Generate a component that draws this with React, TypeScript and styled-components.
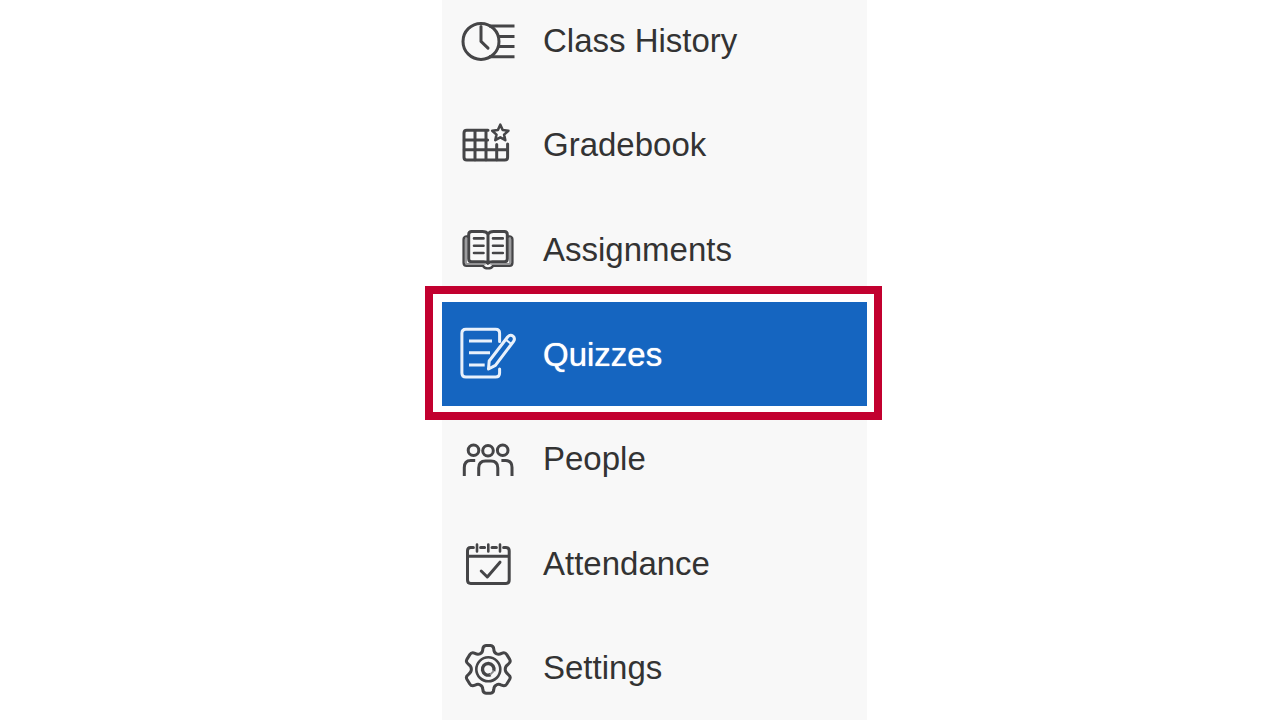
import React from "react";
import styled, { createGlobalStyle } from "styled-components";

const GlobalStyle = createGlobalStyle`
  * { box-sizing: border-box; }
  body {
    margin: 0;
    background: #ffffff;
    font-family: "Liberation Sans", Arial, sans-serif;
  }
`;

const Page = styled.div`
  display: grid;
  grid-template-columns: 442fr 425fr 413fr;
  height: 100vh;
  min-height: 560px;
  overflow: hidden;
`;

const Sidebar = styled.nav`
  grid-column: 2;
  display: flex;
  flex-direction: column;
  background: #f8f8f8;
`;

const Menu = styled.ul`
  flex: 1;
  display: flex;
  flex-direction: column;
  margin: -12px 0 0;
  padding: 0;
  list-style: none;
`;

const MenuItem = styled.li<{ $highlighted: boolean }>`
  flex: 1;
  display: flex;
  position: relative;
  z-index: ${(p) => (p.$highlighted ? 1 : 0)};

  ${(p) =>
    p.$highlighted &&
    `
    &::before {
      content: "";
      position: absolute;
      z-index: -1;
      inset: -16px -15px -14px -17px;
      background: #ffffff;
      border: 8px solid #c2002f;
    }
  `}
`;

const MenuLink = styled.a<{ $active: boolean }>`
  flex: 1;
  display: flex;
  align-items: center;
  gap: 27px;
  padding: 0 18px;
  font-size: 33px;
  line-height: 40px;
  white-space: nowrap;
  text-decoration: none;
  color: ${(p) => (p.$active ? "#ffffff" : "#333333")};
  background: ${(p) => (p.$active ? "#1565c0" : "transparent")};
  text-shadow: ${(p) => (p.$active ? "0 0 1px #ffffff" : "none")};
`;

const Label = styled.span`
  padding-top: 1px;
`;

const Icon = styled.svg<{ $active: boolean }>`
  flex: none;
  width: 56px;
  height: 56px;
  fill: none;
  stroke: ${(p) => (p.$active ? "#e9f1fb" : "#454547")};
  stroke-width: 3;
  stroke-linecap: round;
  stroke-linejoin: round;
`;

const HistoryIcon = (
  <>
    <circle cx="21" cy="29.4" r="18" />
    <path d="M21 14.5V29.4L28 36.2" />
    <path strokeLinecap="butt" d="M29 13.9H54.5M37 24.4H54.5M38 34.6H54.5M29 44.8H54.5" />
  </>
);

const GradebookIcon = (
  <>
    <path d="M28 13.2H6.8Q4 13.2 4 16V40.2Q4 43 6.8 43H44.8Q47.6 43 47.6 40.2V27" />
    <path d="M15 13.4V42.8M26 13.4V42.8M36.7 27.5V42.8M4.3 23H27.6M4.3 32.8H47.3" />
    <path
      strokeWidth="2.6"
      d="M40.3 7.7L42.7 13L48.4 13.7L44.1 17.6L45.3 23.2L40.3 20.4L35.3 23.2L36.5 17.6L32.2 13.7L37.9 13Z"
    />
  </>
);

const AssignmentsIcon = (
  <>
    <path d="M28 13.2Q26.5 10.6 22.5 10.6H11.7Q8.7 10.6 8.7 13.6V37.8Q8.7 40.8 11.7 40.8H23.5Q27 40.8 28 42.3Q29 40.8 32.5 40.8H44.3Q47.3 40.8 47.3 37.8V13.6Q47.3 10.6 44.3 10.6H33.5Q29.5 10.6 28 13.2V42" />
    <path
      strokeWidth="2.4"
      d="M8.7 15.5H6.3Q3.6 16 3.6 18.5V41.8Q3.6 44.8 6.6 44.8H23Q24.5 47.4 28 47.4Q31.5 47.4 33 44.8H49.4Q52.4 44.8 52.4 41.8V18.5Q52.4 16 49.7 15.5H47.3"
    />
    <path d="M6 17V42.8H25M50 17V42.8H31" stroke="#929294" strokeWidth="1.8" />
    <path strokeWidth="2.6" d="M14 17.4H23.5M14 24.7H23.5M14 32H23.5M33 17.4H42.8M33 24.7H42.8M33 32H42.8" />
  </>
);

const QuizzesIcon = (
  <>
    <path d="M39.6 15.5V7.3Q39.6 3.3 35.6 3.3H5.9Q1.9 3.3 1.9 7.3V47Q1.9 51 5.9 51H35.6Q39.6 51 39.6 47V43" />
    <path strokeLinecap="butt" d="M9 15H32M9 26.8H30M9 39H24.7" />
    <path d="M28.5 43L29.2 35L47.6 11Q50.4 8 53 10.2Q55.6 12.6 53.4 15.6L35.4 39.4Z" />
    <path strokeWidth="2" d="M45.8 13.6L51.2 18" />
  </>
);

const PeopleIcon = (
  <>
    <circle cx="13.5" cy="19.2" r="5.3" />
    <circle cx="28" cy="19.8" r="5.3" />
    <circle cx="42.7" cy="19.2" r="5.3" />
    <path
      strokeLinecap="butt"
      d="M4.3 45V36.5Q4.3 29.4 10.8 29.4H15.2M18.7 45V37Q18.7 30 25.5 30H31Q37.8 30 37.8 37V45M52 45V36.5Q52 29.4 45.5 29.4H41.4"
    />
  </>
);

const AttendanceIcon = (
  <>
    <path d="M13.4 12.6H10.7Q7.5 12.6 7.5 15.8V45Q7.5 48.4 10.7 48.4H46Q49.2 48.4 49.2 45V15.8Q49.2 12.6 46 12.6H43.6M20.6 12.6H24.6M32 12.6H36.4M7.5 21.3H49.2" />
    <path strokeWidth="2.6" d="M17 9.5V16.5M28.3 9.5V16.5M40 9.5V16.5" />
    <path d="M21.2 36L27.3 42L40 27.2" />
  </>
);

const SettingsIcon = (
  <>
    <path d="M22.8 9.2Q23 5.6 26 5.4H30.6Q33.6 5.6 33.8 9.2Q33.8 12.6 36.6 13.8Q38.8 15 41.6 13.4Q45 11.8 46.8 14.6L49.7 19.4Q51.2 22.2 48.2 24.2Q45.2 26.2 45.2 29.3Q45.2 32.4 48.2 34.4Q51.2 36.4 49.7 39.2L46.8 44Q45 46.8 41.6 45.2Q38.8 43.6 36.6 44.8Q33.8 46 33.8 49.4Q33.6 53 30.6 53.2H26Q23 53 22.8 49.4Q22.8 46 20 44.8Q17.8 43.6 15 45.2Q11.6 46.8 9.8 44L6.9 39.2Q5.4 36.4 8.4 34.4Q11.4 32.4 11.4 29.3Q11.4 26.2 8.4 24.2Q5.4 22.2 6.9 19.4L9.8 14.6Q11.6 11.8 15 13.4Q17.8 15 20 13.8Q22.8 12.6 22.8 9.2Z" />
    <circle cx="28.3" cy="29.3" r="12" strokeWidth="2.6" />
    <path strokeWidth="3.4" strokeLinecap="butt" d="M30.6 34.6A5.8 5.8 0 1 1 33.8 31" />
    <path strokeWidth="2" d="M30.4 34.4L33.4 31.4" stroke="#8a8a8c" />
  </>
);

const items = [
  { label: "Class History", icon: HistoryIcon },
  { label: "Gradebook", icon: GradebookIcon },
  { label: "Assignments", icon: AssignmentsIcon },
  { label: "Quizzes", icon: QuizzesIcon, active: true },
  { label: "People", icon: PeopleIcon },
  { label: "Attendance", icon: AttendanceIcon },
  { label: "Settings", icon: SettingsIcon },
];

export default function App() {
  return (
    <>
      <GlobalStyle />
      <Page>
        <Sidebar aria-label="Class menu">
          <Menu>
            {items.map(({ label, icon, active = false }) => (
              <MenuItem key={label} $highlighted={active}>
                <MenuLink href="#" $active={active} aria-current={active ? "page" : undefined}>
                  <Icon viewBox="0 0 56 56" $active={active} aria-hidden="true">
                    {icon}
                  </Icon>
                  <Label>{label}</Label>
                </MenuLink>
              </MenuItem>
            ))}
          </Menu>
        </Sidebar>
      </Page>
    </>
  );
}
